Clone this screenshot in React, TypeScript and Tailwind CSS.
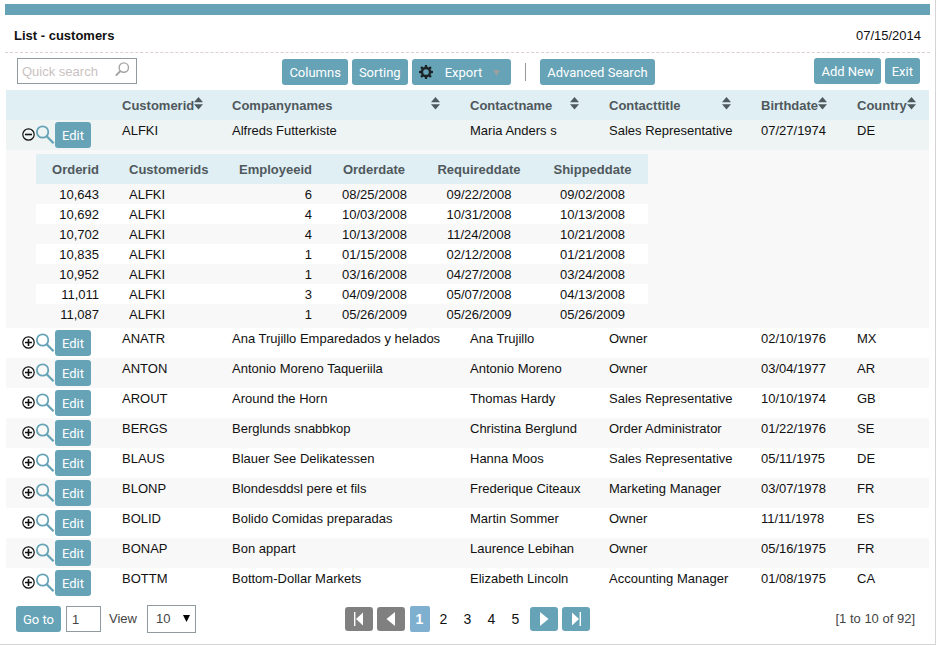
import type { ReactNode } from "react";

type Customer = {
  id: string;
  company: string;
  contact: string;
  title: string;
  birth: string;
  country: string;
};

const customers: Customer[] = [
  { id: "ALFKI", company: "Alfreds Futterkiste", contact: "Maria Anders s", title: "Sales Representative", birth: "07/27/1974", country: "DE" },
  { id: "ANATR", company: "Ana Trujillo Emparedados y helados", contact: "Ana Trujillo", title: "Owner", birth: "02/10/1976", country: "MX" },
  { id: "ANTON", company: "Antonio Moreno Taqueriila", contact: "Antonio Moreno", title: "Owner", birth: "03/04/1977", country: "AR" },
  { id: "AROUT", company: "Around the Horn", contact: "Thomas Hardy", title: "Sales Representative", birth: "10/10/1974", country: "GB" },
  { id: "BERGS", company: "Berglunds snabbkop", contact: "Christina Berglund", title: "Order Administrator", birth: "01/22/1976", country: "SE" },
  { id: "BLAUS", company: "Blauer See Delikatessen", contact: "Hanna Moos", title: "Sales Representative", birth: "05/11/1975", country: "DE" },
  { id: "BLONP", company: "Blondesddsl pere et fils", contact: "Frederique Citeaux", title: "Marketing Manager", birth: "03/07/1978", country: "FR" },
  { id: "BOLID", company: "Bolido Comidas preparadas", contact: "Martin Sommer", title: "Owner", birth: "11/11/1978", country: "ES" },
  { id: "BONAP", company: "Bon appart", contact: "Laurence Lebihan", title: "Owner", birth: "05/16/1975", country: "FR" },
  { id: "BOTTM", company: "Bottom-Dollar Markets", contact: "Elizabeth Lincoln", title: "Accounting Manager", birth: "01/08/1975", country: "CA" },
];

const orders = [
  ["10,643", "ALFKI", "6", "08/25/2008", "09/22/2008", "09/02/2008"],
  ["10,692", "ALFKI", "4", "10/03/2008", "10/31/2008", "10/13/2008"],
  ["10,702", "ALFKI", "4", "10/13/2008", "11/24/2008", "10/21/2008"],
  ["10,835", "ALFKI", "1", "01/15/2008", "02/12/2008", "01/21/2008"],
  ["10,952", "ALFKI", "1", "03/16/2008", "04/27/2008", "03/24/2008"],
  ["11,011", "ALFKI", "3", "04/09/2008", "05/07/2008", "04/13/2008"],
  ["11,087", "ALFKI", "1", "05/26/2009", "05/26/2009", "05/26/2009"],
];

const orderColumns = [
  { name: "Orderid", width: "w-[78px]", align: "text-right" },
  { name: "Customerids", width: "w-[108px]", align: "text-left" },
  { name: "Employeeid", width: "w-[105px]", align: "text-right" },
  { name: "Orderdate", width: "w-[94px]", align: "text-center" },
  { name: "Requireddate", width: "w-[116px]", align: "text-center" },
  { name: "Shippeddate", width: "w-[111px]", align: "text-center" },
];

const columns = [
  { name: "Customerid", width: "w-[110px]" },
  { name: "Companynames", width: "" },
  { name: "Contactname", width: "w-[139px]" },
  { name: "Contacttitle", width: "w-[152px]" },
  { name: "Birthdate", width: "w-[96px]" },
  { name: "Country", width: "w-[82px]" },
];

function Button({ children }: { children: ReactNode }) {
  return (
    <button
      type="button"
      className="flex h-[26px] items-center whitespace-nowrap rounded-[3px] bg-[#66a3b7] px-[7px] pt-0.5 font-[Roboto,'Noto_Sans',sans-serif] text-[13px] text-white"
    >
      {children}
    </button>
  );
}

function SortIcon() {
  return (
    <svg width="9" height="13" viewBox="0 0 9 13" className="mb-[5px] shrink-0" fill="#4f5a5e" aria-hidden="true">
      <path d="M4.5 0 9 5.3H0zM0 7.3h9L4.5 12.6z" />
    </svg>
  );
}

function ToggleIcon({ open }: { open: boolean }) {
  return (
    <svg width="13" height="13" viewBox="0 0 13 13" fill="none" stroke="#111" aria-hidden="true">
      <circle cx="6.5" cy="6.5" r="5.7" strokeWidth="1.2" />
      <path d={open ? "M3 6.5h7" : "M3 6.5h7M6.5 3v7"} strokeWidth="1.6" />
    </svg>
  );
}

function ViewIcon() {
  return (
    <svg width="20" height="20" viewBox="0 0 20 20" fill="none" stroke="#66a3b7" aria-hidden="true">
      <circle cx="7.6" cy="7" r="5.7" strokeWidth="1.8" />
      <path d="M11.7 11.2 18.6 18.2" strokeWidth="2.3" />
    </svg>
  );
}

function GearIcon() {
  const teeth = [0, 45, 90, 135, 180, 225, 270, 315];
  return (
    <svg width="14" height="14" viewBox="0 0 14 14" fill="#1c2326" className="mb-0.5" aria-hidden="true">
      <circle cx="7" cy="7" r="4" fill="none" stroke="#1c2326" strokeWidth="2.3" />
      {teeth.map((angle) => (
        <path key={angle} d="M5.6 2.4 6 0h2l.4 2.4z" transform={`rotate(${angle} 7 7)`} />
      ))}
    </svg>
  );
}

function CustomerRow({ customer, index }: { customer: Customer; index: number }) {
  const open = index === 0;
  const cells = [customer.id, customer.company, customer.contact, customer.title, customer.birth, customer.country];
  const background = open ? "bg-[#eef4f3]" : index % 2 === 0 ? "bg-[#f8f8f8]" : "bg-white";
  return (
    <tr className={`h-[30px] ${background}`}>
      <td className="p-0 pl-4">
        <div className="flex items-center">
          <button type="button" className="pb-0.5" aria-label={open ? "Collapse orders" : "Expand orders"} aria-expanded={open}>
            <ToggleIcon open={open} />
          </button>
          <button type="button" aria-label="View customer">
            <ViewIcon />
          </button>
          <Button>Edit</Button>
        </div>
      </td>
      {cells.map((cell, i) => (
        <td key={columns[i].name} className="whitespace-nowrap p-0 pt-[3px] pl-[10px] align-top leading-4">
          {cell}
        </td>
      ))}
    </tr>
  );
}

function OrdersTable() {
  return (
    <table className="w-[612px] table-fixed border-collapse">
      <thead>
        <tr className="h-[30px] bg-[#dfeff4] text-[#50585c]">
          {orderColumns.map((c) => (
            <th key={c.name} scope="col" className={`${c.width} ${c.align} px-[15px] pt-0.5 pb-0 font-bold`}>
              {c.name}
            </th>
          ))}
        </tr>
      </thead>
      <tbody>
        {orders.map((row, r) => (
          <tr key={row[0]} className={`h-5 ${r % 2 ? "bg-white" : "bg-[#f8f8f8]"}`}>
            {row.map((cell, i) => (
              <td key={orderColumns[i].name} className={`${orderColumns[i].align} px-[15px] pt-0.5 pb-0 leading-[18px]`}>
                {cell}
              </td>
            ))}
          </tr>
        ))}
      </tbody>
    </table>
  );
}

function PagerButton({ label, disabled, path }: { label: string; disabled?: boolean; path: string }) {
  return (
    <button
      type="button"
      aria-label={label}
      disabled={disabled}
      className={`flex h-6 w-7 items-center justify-center rounded-[3px] ${disabled ? "bg-[#808080]" : "bg-[#66a3b7]"}`}
    >
      <svg width="14" height="14" viewBox="0 0 14 14" fill="#fff" aria-hidden="true">
        <path d={path} />
      </svg>
    </button>
  );
}

export default function App() {
  return (
    <div className="border-r border-b border-[#d4d4d4] bg-white pt-1 pr-[5px] pb-[11px] pl-[5px] font-['Liberation_Sans',Arial,sans-serif] text-[13px] text-[#111]">
      <div className="h-[11px] bg-[#66a3b7]" />
      <header className="flex h-[38px] items-center justify-between border-b border-dashed border-[#dccfd0] px-[9px] pt-[5px]">
        <h1 className="font-bold">List - customers</h1>
        <span>07/15/2014</span>
      </header>

      <div className="grid h-[37px] grid-cols-[1fr_auto_1fr] items-start px-[10px] pt-[5px] pl-3">
        <form className="relative w-[120px]">
          <input
            type="text"
            aria-label="Quick search"
            placeholder="Quick search"
            className="h-[26px] w-full border border-[#909b9f] bg-white pr-6 pl-1 placeholder:text-[#c9c2c2]"
          />
          <button type="button" aria-label="Search" className="absolute top-1 right-[7px]">
            <svg width="15" height="15" viewBox="0 0 15 15" fill="none" stroke="#a5a5a5" aria-hidden="true">
              <circle cx="8.8" cy="5.6" r="4.7" strokeWidth="1.4" />
              <path d="M5.4 9 .9 13.6" strokeWidth="2" />
            </svg>
          </button>
        </form>
        <div className="flex items-center gap-1 pt-px">
          <Button>Columns</Button>
          <Button>Sorting</Button>
          <Button>
            <GearIcon />
            <span className="ml-3">Export</span>
            <svg width="7" height="6" viewBox="0 0 7 6" fill="#9c9f9f" className="mr-1 ml-[11px]" aria-hidden="true">
              <path d="M0 0h7L3.5 6z" />
            </svg>
          </Button>
          <div className="mx-[10px] h-[18px] w-px bg-[#999]" />
          <Button>Advanced Search</Button>
        </div>
        <div className="flex justify-end gap-1">
          <Button>Add New</Button>
          <Button>Exit</Button>
        </div>
      </div>

      <div className="px-px">
        <table className="w-full table-fixed border-collapse">
          <thead>
            <tr className="h-[30px] bg-[#dfeff4] text-[#50585c]">
              <td className="w-[106px] p-0" />
              {columns.map((c) => (
                <th
                  key={c.name}
                  scope="col"
                  className={`${c.width} p-0 pt-0.5 pr-5 pl-[10px] text-left font-bold last:pr-[14px]`}
                >
                  <div className="flex items-center justify-between">
                    {c.name}
                    <SortIcon />
                  </div>
                </th>
              ))}
            </tr>
          </thead>
          <tbody>
            <CustomerRow customer={customers[0]} index={0} />
            <tr className="bg-[#f8f8f8]">
              <td colSpan={7} className="py-1 pr-0 pl-[30px]">
                <OrdersTable />
              </td>
            </tr>
            {customers.slice(1).map((c, i) => (
              <CustomerRow key={c.id} customer={c} index={i + 1} />
            ))}
          </tbody>
        </table>
      </div>

      <footer className="mt-[7px] grid grid-cols-[1fr_auto_1fr] items-center pr-3 pl-[11px]">
        <form className="flex items-center">
          <Button>Go to</Button>
          <input
            type="text"
            aria-label="Page number"
            defaultValue="1"
            className="ml-[5px] h-[26px] w-[35px] border border-[#909b9f] bg-white px-[5px] text-[#444]"
          />
          <label htmlFor="page-size" className="ml-2 text-[#444]">
            View
          </label>
          <div className="relative ml-[10px]">
            <select
              id="page-size"
              defaultValue="10"
              className="block h-7 w-[49px] appearance-none border border-[#909b9f] bg-white pl-2 text-[#444]"
            >
              <option>10</option>
              <option>20</option>
              <option>50</option>
            </select>
            <svg
              width="7"
              height="7"
              viewBox="0 0 7 7"
              className="pointer-events-none absolute top-[10px] right-[6px]"
              aria-hidden="true"
            >
              <path d="M0 0h7L3.5 7z" />
            </svg>
          </div>
        </form>
        <nav aria-label="Pages" className="flex items-center gap-1 text-sm">
          <PagerButton label="First page" disabled path="M2 0h1.4v14H2zM11 .5v13L4 7z" />
          <PagerButton label="Previous page" disabled path="M11 0v14L2.5 7z" />
          <span className="ml-px flex gap-1">
            <a
              href="#1"
              aria-current="page"
              className="flex h-[26px] w-5 items-center justify-center rounded-[2px] bg-[#7fb0cf] font-bold text-white"
            >
              1
            </a>
            {["2", "3", "4", "5"].map((page) => (
              <a key={page} href={`#${page}`} className="flex h-[26px] w-5 items-center justify-center">
                {page}
              </a>
            ))}
          </span>
          <PagerButton label="Next page" path="M3 0v14L11.5 7z" />
          <PagerButton label="Last page" path="M10.6 0H12v14h-1.4zM3 .5v13L10 7z" />
        </nav>
        <span className="pr-[3px] text-right text-[#444]">[1 to 10 of 92]</span>
      </footer>
    </div>
  );
}
